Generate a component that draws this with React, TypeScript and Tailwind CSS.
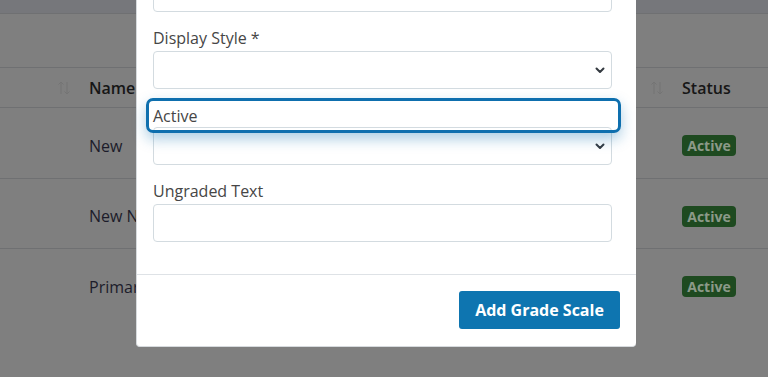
import React from "react";

const font = { fontFamily: '"Open Sans", "Liberation Sans", sans-serif' };

function Chevron() {
  return (
    <svg className="w-[10px] h-[7px]" viewBox="0 0 10 7" fill="none">
      <path d="M1.5 1.5l3.5 3.5 3.5-3.5" stroke="#343a40" strokeWidth={2} strokeLinecap="round" strokeLinejoin="round" />
    </svg>
  );
}

function SortIcon() {
  return (
    <svg className="w-[14px] h-[14px]" viewBox="0 0 14 14" fill="none" stroke="#747474" strokeWidth={1}>
      <path d="M4 13V1M1.5 3.5L4 1l2.5 2.5" />
      <path d="M10 1v12M7.5 10.5L10 13l2.5-2.5" />
    </svg>
  );
}

function Badge() {
  return (
    <span className="inline-flex items-center justify-center w-[54px] h-[21px] rounded-[4px] bg-[#1e4a20] text-[#8c9a89] text-[14px] font-bold">
      Active
    </span>
  );
}

const rows = [
  { name: "New", h: "h-[71px] border-b" },
  { name: "New Name", h: "h-[70px] border-b" },
  { name: "Primary", h: "h-[70px]" },
];

export default function App() {
  return (
    <div className="relative w-[768px] h-[377px] overflow-hidden bg-[#7f7f7f]" style={font}>

      {/* Page behind the modal */}
      <div className="h-[14px] bg-[#76777b] border-b border-[#6f7072]" />
      <div className="h-[54px] border-b border-[#6f7072]" />
      <div className="h-[40px] flex items-center border-b border-[#6f7072] text-[16px] font-semibold text-[#161616]">
        <div className="w-[57px]" />
        <SortIcon />
        <div className="ml-[18px] w-[561px]">Name</div>
        <SortIcon />
        <div className="ml-[18px]">Status</div>
      </div>
      {rows.map((r) => (
        <div key={r.name} className={`${r.h} flex items-center pt-[5px] border-[#6f7072] text-[16px] text-[#1c1c2a]`}>
          <div className="w-[89px]" />
          <div className="w-[593px]">{r.name}</div>
          <Badge />
        </div>
      ))}

      {/* Modal */}
      <div className="absolute left-[136px] top-[-60px] w-[500px] bg-white border-l border-b border-[#d6dadd] rounded-b-[4px]">
        <div className="pl-4 pr-6 pt-[34px] pb-[32px]">
          <div className="h-[38px] border border-[#d3dbe0] rounded-[4px]" />

          <label className="block mt-[14px] h-[24px] leading-[24px] text-[16px] text-[#464646]">Display Style *</label>
          <div className="mt-[1px] h-[38px] border border-[#d3dbe0] rounded-[4px] flex items-center justify-end pr-[6px]">
            <Chevron />
          </div>

          <div className="relative mt-[13px] h-[24px]">
            <div className="absolute left-[-7px] right-[-9px] top-[-4px] h-[35px] border-[3px] border-[#0e6fae] rounded-[7px] shadow-[0_6px_14px_rgba(14,111,174,0.35)] z-10 flex items-center pl-[4px] text-[16px] text-[#464646]">
              Active
            </div>
          </div>
          <div className="mt-[1px] h-[38px] border border-[#d3dbe0] rounded-[4px] flex items-center justify-end pr-[6px]">
            <Chevron />
          </div>

          <label className="block mt-[14px] h-[24px] leading-[24px] text-[16px] text-[#464646]">Ungraded Text</label>
          <div className="mt-[1px] h-[38px] border border-[#d3dbe0] rounded-[4px]" />
        </div>

        <div className="border-t border-[#dee2e6] px-4 pt-[16px] pb-[17px] flex justify-end">
          <button className="w-[161px] h-[38px] rounded-[3px] bg-[#0e75b0] text-white text-[16px] font-bold">
            Add Grade Scale
          </button>
        </div>
      </div>
    </div>
  );
}
